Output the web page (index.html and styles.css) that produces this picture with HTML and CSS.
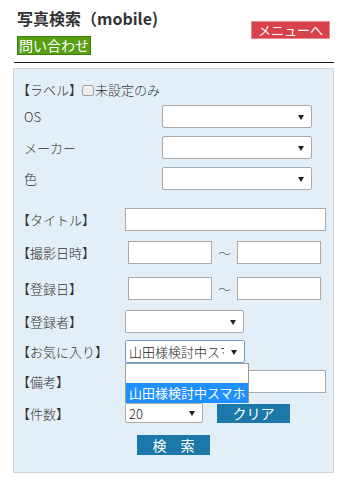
FILE: index.html
```html
<!DOCTYPE html>
<html lang="ja">
  <head>
    <meta charset="UTF-8" />
    <meta name="viewport" content="width=device-width, initial-scale=1.0" />
    <title>写真検索（mobile)</title>
    <link rel="stylesheet" href="styles.css">
  </head>
  <body>
    <div class="page">
      <div class="header">
        <div class="header-left">
          <h1 class="title">写真検索（mobile)</h1>
          <a class="btn btn-green">問い合わせ</a>
        </div>
        <a class="btn btn-red">メニューへ</a>
      </div>
      <div class="rule"></div>

      <form class="panel">
        <div class="row row-label">
          【ラベル】<span class="check"></span>未設定のみ
        </div>
        <div class="row mt5">
          <span class="lbl lbl-sub">OS</span>
          <span class="sel w150"><select></select></span>
        </div>
        <div class="row mt8">
          <span class="lbl lbl-sub">メーカー</span>
          <span class="sel w150"><select></select></span>
        </div>
        <div class="row mt8">
          <span class="lbl lbl-sub">色</span>
          <span class="sel w150"><select></select></span>
        </div>
        <div class="row mt18">
          <span class="lbl">【タイトル】</span>
          <input type="text" class="txt w201" />
        </div>
        <div class="row mt10">
          <span class="lbl lbl-date">【撮影日時】</span>
          <input type="text" class="txt w84" />
          <span class="tilde">～</span>
          <input type="text" class="txt w84" />
        </div>
        <div class="row mt13">
          <span class="lbl lbl-date">【登録日】</span>
          <input type="text" class="txt w84" />
          <span class="tilde">～</span>
          <input type="text" class="txt w84" />
        </div>
        <div class="row mt10">
          <span class="lbl">【登録者】</span>
          <span class="sel w119"><select></select></span>
        </div>
        <div class="row mt7 row-fav">
          <span class="lbl">【お気に入り】</span>
          <span class="sel w120">
            <select class="focused"><option>山田様検討中スマホ</option></select>
            <div class="dropdown">
              <div class="opt"></div>
              <div class="opt opt-active">山田様検討中スマホ</div>
            </div>
          </span>
        </div>
        <div class="row mt7">
          <span class="lbl">【備考】</span>
          <input type="text" class="txt w201" />
        </div>
        <div class="row row-short mt10">
          <span class="lbl">【件数】</span>
          <span class="sel sel-short w78"><select><option>20</option></select></span>
          <button type="button" class="btn-blue btn-clear">クリア</button>
        </div>
        <div class="row row-short mt12">
          <button type="button" class="btn-blue btn-search">検　索</button>
        </div>
      </form>
    </div>
  </body>
</html>
```

FILE: styles.css
```css
* {
  box-sizing: border-box;
}

body {
  margin: 0;
  font-family: "Noto Sans CJK JP", "Noto Sans", sans-serif;
  font-size: 13px;
  font-weight: 300;
  color: #333;
  background: #fff;
}

.page {
  padding: 8px 10px 0 13px;
}

/* header */
.header {
  display: flex;
  justify-content: space-between;
  align-items: flex-start;
  padding-left: 4px;
}

.title {
  margin: 0;
  font-size: 16px;
  line-height: 20px;
  font-weight: bold;
  color: #333;
}

.btn {
  display: inline-block;
  color: #fff;
  font-weight: 400;
  text-decoration: none;
  white-space: nowrap;
}

.btn-green {
  margin-top: 8px;
  height: 19px;
  line-height: 17px;
  padding: 0 1px;
  font-size: 14px;
  background: #56a012;
  border: 1px solid #3f7c0b;
}

.btn-red {
  margin-top: 13px;
  margin-right: 4px;
  height: 18px;
  line-height: 16px;
  padding: 0 6px;
  font-size: 13px;
  background: #d7424b;
  border: 1px solid #e58a8f;
}

.rule {
  margin-top: 7px;
  border-top: 1px solid #1a1a1a;
  margin-left: 1px;
}

/* search panel */
.panel {
  margin: 5px 0 0;
  padding: 11px 7px 17px 3px;
  background: #e3eff8;
  border: 1px solid #cfd5da;
}

.row {
  display: flex;
  align-items: center;
  height: 23px;
}

.row-label {
  height: 20px;
  line-height: 20px;
}

.row-short {
  height: 20px;
}

.mt5 { margin-top: 5px; }
.mt7 { margin-top: 7px; }
.mt8 { margin-top: 8px; }
.mt10 { margin-top: 10px; }
.mt12 { margin-top: 12px; }
.mt13 { margin-top: 13px; }
.mt18 { margin-top: 18px; }

.check {
  display: inline-block;
  width: 12px;
  height: 11px;
  margin: 0 1px 0 0;
  border: 1px solid #a3a3a3;
  border-radius: 2px;
  background: #eeeeee;
}

.lbl {
  flex: none;
  width: 108px;
  white-space: nowrap;
}

.lbl-sub {
  width: 145px;
  padding-left: 7px;
}

.lbl-date {
  width: 111px;
}

.txt {
  height: 23px;
  margin: 0;
  padding: 0 3px;
  border: 1px solid #a9a9a9;
  background: #fff;
  font: inherit;
}

.w84 { width: 84px; }
.w201 { width: 201px; }
.w150 { width: 150px; }
.w119 { width: 119px; }
.w120 { width: 120px; }
.w78 { width: 78px; }

.tilde {
  width: 25px;
  text-align: center;
  color: #555;
}

.sel {
  position: relative;
  display: inline-block;
  height: 23px;
}

.sel select {
  -webkit-appearance: none;
  appearance: none;
  width: 100%;
  height: 100%;
  margin: 0;
  padding: 0 20px 0 3px;
  border: 1px solid #a9a9a9;
  border-radius: 2px;
  background: #fff;
  color: #222;
  font: inherit;
  font-size: 13px;
}

.sel::after {
  content: "";
  position: absolute;
  right: 8px;
  top: 50%;
  margin-top: -2px;
  border-left: 3px solid transparent;
  border-right: 3px solid transparent;
  border-top: 5px solid #222;
}

.sel-short {
  height: 20px;
}

.sel select.focused {
  border-color: #6d9fd6;
}

.dropdown {
  position: absolute;
  top: 23px;
  left: 0;
  width: 124px;
  z-index: 2;
  background: #fff;
  border: 1px solid #9a9a9a;
  border-bottom: none;
}

.opt {
  height: 19px;
  line-height: 19px;
  padding-left: 3px;
  font-size: 13px;
  white-space: nowrap;
}

.opt-active {
  height: 20px;
  line-height: 20px;
  background: #1e90ff;
  color: #fff;
  font-weight: 400;
}

.btn-blue {
  height: 19px;
  width: 73px;
  padding: 0;
  border: none;
  background: #1c78a9;
  color: #fff;
  font-family: inherit;
  font-size: 14px;
  font-weight: 400;
  line-height: 19px;
}

.btn-clear {
  margin-left: 14px;
}

.btn-search {
  margin-left: 120px;
  height: 20px;
}
```
